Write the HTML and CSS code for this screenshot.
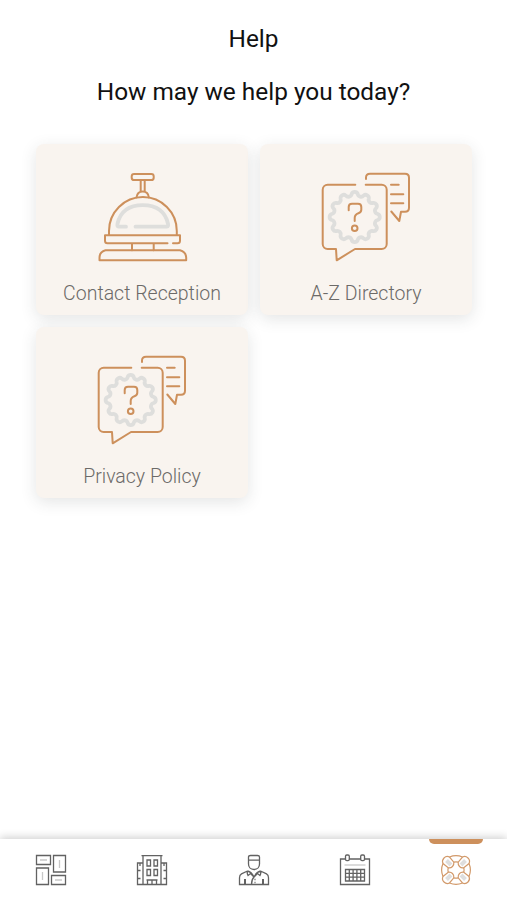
FILE: index.html
```html
<!DOCTYPE html>
<html lang="en">
<head>
  <meta charset="UTF-8" />
  <meta name="viewport" content="width=device-width, initial-scale=1.0" />
  <title>Help</title>
  <link rel="stylesheet" href="styles.css">
</head>
<body>
  <svg class="defs" width="0" height="0">
    <symbol id="chat" viewBox="0 0 92 92">
      <path class="soft" transform="translate(34.7 46)" d="M3-23A3.4 3.4 0 0 0 8.9-21.4A3.2 3.2 0 0 1 14.1-18.4A3.4 3.4 0 0 0 18.4-14.1A3.2 3.2 0 0 1 21.4-8.9A3.4 3.4 0 0 0 23-3A3.2 3.2 0 0 1 23 3A3.4 3.4 0 0 0 21.4 8.9A3.2 3.2 0 0 1 18.4 14.1A3.4 3.4 0 0 0 14.1 18.4A3.2 3.2 0 0 1 8.9 21.4A3.4 3.4 0 0 0 3 23A3.2 3.2 0 0 1-3 23A3.4 3.4 0 0 0-8.9 21.4A3.2 3.2 0 0 1-14.1 18.4A3.4 3.4 0 0 0-18.4 14.1A3.2 3.2 0 0 1-21.4 8.9A3.4 3.4 0 0 0-23 3A3.2 3.2 0 0 1-23-3A3.4 3.4 0 0 0-21.4-8.9A3.2 3.2 0 0 1-18.4-14.1A3.4 3.4 0 0 0-14.1-18.4A3.2 3.2 0 0 1-8.9-21.4A3.4 3.4 0 0 0-3-23A3.2 3.2 0 0 1 3-23Z" />
      <path d="M35.3 13.7H7.7a5 5 0 0 0-5 5V73a5 5 0 0 0 5 5H16l.7 11.3L35 78h26.700a5 5 0 0 0 5-5V18.700a5 5 0 0 0-5-5h-16" />
      <path d="M46 8V6.500q0-3.800 4-3.800h35q4 0 4 4v30q0 4-4 4h-4L79.300 50l-8-9.500M71 13.700h7.700M71 23.300h12.300M71 32.300h12.300" />
      <path d="M28.700 39.300v-3.300q0-3.300 3.300-3.300h6q3.300 0 3.300 3.300v2.700q0 2.600-2.900 3.500-3.700 1.200-3.700 4.800v3" />
      <circle cx="34.700" cy="57.300" r="2.800" />
    </symbol>
  </svg>

  <main>
    <h1>Help</h1>
    <h2>How may we help you today?</h2>
    <div class="grid">
      <a class="card">
        <svg class="card-icon" viewBox="0 0 92 92">
          <path class="soft" d="M30 55.700h-7.500q-1.500 0-1-3C24.500 40 34 34.200 46.800 34.200S69 40 72 52.700q.5 3-1 3H39.500" />
          <rect x="35.700" y="2.900" width="22" height="6.200" rx="2.400" />
          <path d="M44.700 9.100v11.500M48.700 9.100v11.500M40.500 26.500q.7-6 6.200-6t6.200 6" />
          <path d="M13 64V60a33.900 33.900 0 0 1 67.800 0v4" />
          <path d="M71.500 72.300H11.500q-2.500 0-2.500-2.500v-5.500h75v5.500q0 2.500-2.500 2.500H77M36 72.300v7M57.700 72.300v7" />
          <path d="M9.500 79.300h74.500q6 1.500 6.200 7.500v2.500H3.500v-2.500q0-6 6-7.500Z" />
        </svg>
        <span>Contact Reception</span>
      </a>
      <a class="card">
        <svg class="card-icon"><use href="#chat" /></svg>
        <span>A-Z Directory</span>
      </a>
      <a class="card">
        <svg class="card-icon"><use href="#chat" /></svg>
        <span>Privacy Policy</span>
      </a>
    </div>
  </main>

  <nav class="tabs">
    <a class="tab">
      <svg viewBox="0 0 32 32">
        <path d="M1.500 1.500h14v9h-14zM18.500 1.500h12v16.500h-12zM1.500 14h12v16.500h-12zM16.500 21.500h14v9h-14z" />
        <path class="faint" d="M5 6h7M24.500 6v8M7.500 18v8M20 26h7" />
      </svg>
    </a>
    <a class="tab">
      <svg viewBox="0 0 32 32">
        <path d="M5.500 1.700h21M7 2v28.500M25 2v28.500M7 9H1.500v21.500h29V9H25" />
        <path d="M11 6h3.500v6H11zM18 6h3.500v6H18zM11 15.500h3.500v6H11zM18 15.500h3.500v6H18zM10.500 26h11M11.500 26v4.500M16 26v4.500M20.500 26v4.500" />
        <path d="M2 16.500h2.500M2 24.500h2.500M27.500 16.500H30M27.500 24.500H30M4 9v3M28 9v3" />
      </svg>
    </a>
    <a class="tab">
      <svg viewBox="0 0 32 32">
        <path d="M10.500 6V3q0-1.500 2-1.500h7q2 0 2 1.500v7c0 3-2 5.500-5.500 5.500S10.500 13 10.500 10zM10.500 6.200h11" />
        <path d="M9.500 17l-6 2.800q-2 1-2 4v6.700h29v-6.700q0-3-2-4l-6-2.800M9.500 17q-.7 2.500.5 4.500l2.500-2 3.500 3.500 3.500-3.500 2.500 2q1.200-2 .5-4.500M9.500 17q4 1 6.500 6 2.500-5 6.500-6M16 23q-2.500 2.500-2.500 7.500" />
        <path class="sleeve" d="M7 25v5.500M25 25v5.500" />
        <path d="M16.500 25.500h1M16.500 28.500h1" />
      </svg>
    </a>
    <a class="tab">
      <svg viewBox="0 0 32 32">
        <path d="M6.500 5h-5v25.500h29V5h-5M10 5h12" />
        <rect x="6.500" y="1" width="3.800" height="5.600" rx="1.300" />
        <rect x="21.700" y="1" width="3.800" height="5.600" rx="1.300" />
        <path d="M6.500 15.500h19V27h-19zM6.500 19.300h19M6.500 23.200h19M10.300 15.500V27M14.100 15.500V27M17.900 15.500V27M21.700 15.500V27" />
        <path class="faint" d="M5.500 11h21" />
      </svg>
    </a>
    <a class="tab active">
      <svg viewBox="0 0 32 32">
        <path class="band" d="M6.500 6.500l4.500 4.500M25.500 6.500l-4.500 4.500M6.500 25.500l4.500-4.500M25.500 25.500l-4.500-4.500" />
        <path d="M9.500 3Q16 .2 22.500 3M29 9.500q2.800 6.500 0 13M22.500 29q-6.500 2.800-13 0M3 22.500Q.2 16 3 9.500" />
        <g id="strap">
          <path d="M3 9.500Q1.600 6.500 4 4t5.500-1l4.300 5.200q.4 2.600-1.300 4.300t-4.300 1.300z" />
        </g>
        <use href="#strap" transform="rotate(90 16 16)" />
        <use href="#strap" transform="rotate(180 16 16)" />
        <use href="#strap" transform="rotate(270 16 16)" />
        <path d="M13.800 8.200q2.200-.6 4.400 0M23.800 13.800q.6 2.200 0 4.400M18.200 23.800q-2.200.6-4.400 0M8.200 18.200q-.6-2.200 0-4.400" />
      </svg>
    </a>
  </nav>
</body>
</html>
```

FILE: styles.css
```css
body {
  margin: 0;
  height: 100vh;
  display: flex;
  flex-direction: column;
  overflow: hidden;
  background: #fff;
  font-family: Roboto, sans-serif;
  color: #111;
}
.defs {
  display: block;
  flex: none;
}
main {
  flex: 1;
}
h1, h2 {
  margin: 0;
  font-size: 24.4px;
  line-height: 30px;
  font-weight: 400;
  text-align: center;
}
h1 {
  padding-top: 24px;
}
h2 {
  margin-top: 23px;
}
.grid {
  display: grid;
  grid-template-columns: 212px 212px;
  grid-auto-rows: 171px;
  gap: 12px;
  padding: 37px 0 0 36px;
}
.card {
  display: flex;
  flex-direction: column;
  align-items: center;
  background: #f9f4ef;
  border-radius: 8px;
  box-shadow: 0 4px 16px rgba(50, 55, 55, 0.13);
  font-size: 19.5px;
  font-weight: 300;
  line-height: 24px;
  color: #6c6a68;
}
.card-icon {
  width: 92px;
  height: 92px;
  margin: 27px 0 19px;
  fill: none;
  stroke: #cd905c;
  stroke-width: 2;
  stroke-linecap: round;
  stroke-linejoin: round;
}
.soft {
  stroke: #dededc;
  stroke-width: 3.8;
}
.tabs {
  display: flex;
  height: 61px;
  background: #fff;
  box-shadow: 0 -2px 8px rgba(0, 0, 0, 0.18);
}
.tab {
  flex: 1;
  display: flex;
  justify-content: center;
  align-items: center;
  position: relative;
}
.tab svg {
  width: 32px;
  height: 32px;
  fill: none;
  stroke: #626262;
  stroke-width: 1.3;
}
.tab .faint {
  stroke: #c8c8c8;
}
.tab .sleeve {
  stroke-width: 2;
}
.tab.active svg {
  stroke: #d29a6b;
  stroke-width: 1.2;
}
.tab.active .band {
  stroke: #dedede;
  stroke-width: 4;
}
.tab.active::before {
  content: "";
  position: absolute;
  top: 0;
  width: 54px;
  height: 5px;
  border-radius: 0 0 5px 5px;
  background: #cd905c;
}
```
